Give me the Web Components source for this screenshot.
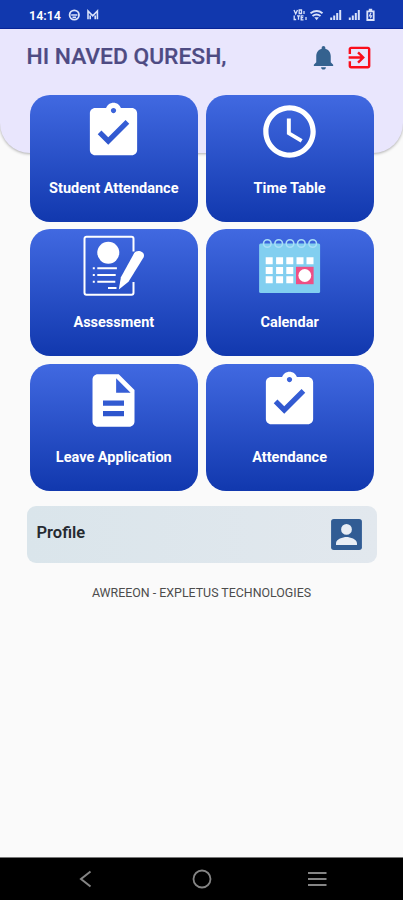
<!DOCTYPE html>
<html lang="en">
<head>
<meta charset="UTF-8">
<meta name="viewport" content="width=device-width, initial-scale=1.0">
<title>School Dashboard</title>
<style>
    html, body { height: 100%; }
    body {
        margin: 0;
        background: #fafafa;
        font-family: Roboto, "Liberation Sans", sans-serif;
        overflow: hidden;
    }
</style>
</head>
<body>
<school-app>
    <status-bar slot="top" time="14:14"></status-bar>
    <app-header>HI NAVED QURESH,</app-header>
    <menu-grid>
        <menu-card icon="task">Student Attendance</menu-card>
        <menu-card icon="clock">Time Table</menu-card>
        <menu-card icon="assessment">Assessment</menu-card>
        <menu-card icon="calendar">Calendar</menu-card>
        <menu-card icon="document">Leave Application</menu-card>
        <menu-card icon="task">Attendance</menu-card>
    </menu-grid>
    <profile-row>Profile</profile-row>
    <app-credit>AWREEON - EXPLETUS TECHNOLOGIES</app-credit>
    <nav-bar slot="bottom"></nav-bar>
</school-app>

<script>
const ICONS = {
    task: `<svg viewBox="0 0 24 24" fill="#fff"><path d="M19 3h-4.18C14.4 1.84 13.3 1 12 1s-2.4.84-2.82 2H5c-1.1 0-2 .9-2 2v14c0 1.1.9 2 2 2h14c1.1 0 2-.9 2-2V5c0-1.1-.9-2-2-2zm-7 0c.55 0 1 .45 1 1s-.45 1-1 1-1-.45-1-1 .45-1 1-1zm-2 14l-4-4 1.41-1.41L10 14.17l6.59-6.59L18 9l-8 8z"/></svg>`,
    clock: `<svg viewBox="0 0 24 24" fill="#fff"><path d="M11.99 2C6.47 2 2 6.48 2 12s4.47 10 9.99 10C17.52 22 22 17.52 22 12S17.52 2 11.99 2zM12 20c-4.42 0-8-3.58-8-8s3.58-8 8-8 8 3.58 8 8-3.58 8-8 8zm.5-13H11v6l5.25 3.15.75-1.23-4.5-2.67z"/></svg>`,
    document: `<svg viewBox="0 0 24 24" fill="#fff"><path d="M14 2H6c-1.1 0-1.99.9-1.99 2L4 20c0 1.1.89 2 1.99 2H18c1.1 0 2-.9 2-2V8l-6-6zm2 16H8v-2h8v2zm0-4H8v-2h8v2zm-3-5V3.5L18.5 9H13z"/></svg>`,
    assessment: `<svg viewBox="-.5 -.5 63 63" fill="none" stroke="#fff" stroke-width="2">
        <path d="M51 17V4.2a2 2 0 0 0-2-2H4a2 2 0 0 0-2 2v54a2 2 0 0 0 2 2h45a2 2 0 0 0 2-2V47.5"/>
        <circle cx="25.8" cy="18.2" r="11" fill="#fff" stroke="none"/>
        <path d="M14.8 33.8h19.6M14.8 40.5h18.4M14.8 47.2h18M25.5 53.5h8.5M10.3 33.8h2M10.3 40.5h2M10.3 47.2h2"/>
        <path d="M36.3 55l2.1-12.3L51.7 18.6c2.5-4.5 12-1.6 9.3 4.3L46 47.3z" fill="#fff" stroke="none"/>
    </svg>`,
    calendar: `<svg viewBox="-.5 -.5 63 63">
        <rect x=".6" y="9" width="61" height="49.4" rx="1.5" fill="#82cff0"/>
        <g fill="none" stroke="#a9def7" stroke-width="1.6">
            <circle cx="8.8" cy="9" r="3.8"/><circle cx="20.2" cy="9" r="3.8"/><circle cx="31.5" cy="9" r="3.8"/><circle cx="42.8" cy="9" r="3.8"/><circle cx="54.2" cy="9" r="3.8"/>
        </g>
        <path fill="#fff" d="M7.2 22.8h7v7h-7zM17.6 22.8h7v7h-7zM27.8 22.8h7v7h-7zM38 22.8h7v7h-7zM48 22.8h7v7h-7zM7.2 32.6h7v7h-7zM17.6 32.6h7v7h-7zM27.8 32.6h7v7h-7zM7.2 41.8h7v7h-7zM17.6 41.8h7v7h-7zM27.8 41.8h7v7h-7z"/>
        <rect x="37.5" y="32.3" width="17.6" height="17.4" fill="#ef4f85"/>
        <circle cx="46.3" cy="41" r="6.4" fill="#fff"/>
    </svg>`
};

class SchoolApp extends HTMLElement {
    constructor() {
        super();
        this.attachShadow({ mode: 'open' }).innerHTML = `
            <style>
                :host { display: flex; flex-direction: column; height: 100vh; }
                main { flex: 1; min-height: 0; }
            </style>
            <slot name="top"></slot>
            <main><slot></slot></main>
            <slot name="bottom"></slot>
        `;
    }
}

class StatusBar extends HTMLElement {
    connectedCallback() {
        this.attachShadow({ mode: 'open' }).innerHTML = `
            <style>
                :host {
                    display: flex;
                    align-items: center;
                    box-sizing: border-box;
                    height: 28.5px;
                    padding: 3px 28px 0 29px;
                    background: #1138ae;
                    border-bottom: 1.5px solid #0826a0;
                    color: #fff;
                }
                time { font-size: 12.5px; font-weight: 600; width: 39px; }
                svg { display: block; }
                .right { margin-left: auto; }
            </style>
            <time>${this.getAttribute('time')}</time>
            <svg width="32" height="14" viewBox="0 0 32 14" fill="none" stroke="#d9e2fa">
                <circle cx="6.3" cy="7" r="4.7" stroke-width="1.8"/>
                <path d="M3.2 7h6.2M4.5 9.2h3.6" stroke-width="1.4"/>
                <path d="M20 11.2V3l4.7 4.8L29.4 3v8.2M22.2 11.2V7.5M27.2 11.2V7.5" stroke-width="1.6"/>
            </svg>
            <svg class="right" width="82" height="14" viewBox="0 0 82 14" fill="none" stroke="#d9e2fa">
                <path d="M1 2l1.7 4L4.5 2M6.2 2h2.3v3.5H6.2zM1.2 7.5v4h2M4 7.8h3M5.5 7.8v4M10.5 7.8H8.2v4h2.3M8.2 9.7h2M11 3v3M13 9v3" stroke-width="1.3"/>
                <path d="M17.5 5.2q6.5-4.5 12 0M19.5 8q4-3 8 0" stroke-width="1.9"/>
                <path d="M21.3 9.2h4.6l-2.3 3z" fill="#d9e2fa" stroke="none"/>
                <path d="M38.2 12V9.5M41.2 12V7.5M44.2 12V5M47.2 12V2" stroke-width="2"/>
                <path d="M56.8 12V9.5M59.8 12V7.5M62.8 12V5M65.8 12V2" stroke-width="2"/>
                <path d="M74.3 3.3h6.4v8.7h-6.4zM75.8 1.7h3.4" stroke-width="1.8"/>
                <path d="M78 4.8l-1.5 3h2l-1.1 2.5" stroke-width="1.2"/>
            </svg>
        `;
    }
}

class AppHeader extends HTMLElement {
    constructor() {
        super();
        this.attachShadow({ mode: 'open' }).innerHTML = `
            <style>
                :host {
                    display: flex;
                    align-items: flex-start;
                    box-sizing: border-box;
                    height: 124.5px;
                    padding: 14px 29.5px 0 26.5px;
                    background: #e9e6fd;
                    border-radius: 0 0 30px 30px;
                    box-shadow: 0 1px 3px rgba(0, 0, 0, .3);
                }
                h1 { margin: 0; font-size: 22.8px; line-height: 27px; font-weight: 500; color: #4e4b83; -webkit-text-stroke: .2px #4e4b83; white-space: nowrap; }
                .actions { display: flex; gap: 6.5px; margin-left: auto; }
                svg { display: block; width: 29px; height: 29px; }
            </style>
            <h1><slot></slot></h1>
            <div class="actions">
                <svg viewBox="0 0 24 24" fill="#35628f"><path d="M12 22c1.1 0 2-.9 2-2h-4c0 1.1.89 2 2 2zm6-6v-5c0-3.07-1.64-5.64-4.5-6.32V4c0-.83-.67-1.5-1.5-1.5s-1.5.67-1.5 1.5v.68C7.63 5.36 6 7.92 6 11v5l-2 2v1h16v-1l-2-2z"/></svg>
                <svg viewBox="0 0 24 24" fill="#fb0d1b"><path d="M10.09 15.59L11.5 17l5-5-5-5-1.41 1.41L12.67 11H3v2h9.67l-2.58 2.59zM19 3H5c-1.11 0-2 .9-2 2v4h2V5h14v14H5v-4H3v4c0 1.1.89 2 2 2h14c1.1 0 2-.9 2-2V5c0-1.1-.9-2-2-2z"/></svg>
            </div>
        `;
    }
}

class MenuGrid extends HTMLElement {
    constructor() {
        super();
        // the negative margin pulls the first row up over the header
        this.attachShadow({ mode: 'open' }).innerHTML = `
            <style>
                :host {
                    display: grid;
                    grid-template-columns: 168px 168px;
                    grid-auto-rows: 127px;
                    gap: 7.6px 7.8px;
                    margin: -58.3px 0 0 29.8px;
                }
            </style>
            <slot></slot>
        `;
    }
}

class MenuCard extends HTMLElement {
    connectedCallback() {
        this.attachShadow({ mode: 'open' }).innerHTML = `
            <style>
                :host {
                    display: flex;
                    flex-direction: column;
                    align-items: center;
                    box-sizing: border-box;
                    padding-top: 5px;
                    border-radius: 20px;
                    background: linear-gradient(#4169e1, #1138ae);
                    color: #fff;
                }
                svg { display: block; width: 63px; height: 63px; }
                span { margin-top: 17px; font-size: 14.5px; line-height: 18px; font-weight: 700; white-space: nowrap; }
            </style>
            ${ICONS[this.getAttribute('icon')]}
            <span><slot></slot></span>
        `;
    }
}

class ProfileRow extends HTMLElement {
    constructor() {
        super();
        this.attachShadow({ mode: 'open' }).innerHTML = `
            <style>
                :host {
                    display: flex;
                    align-items: center;
                    justify-content: space-between;
                    box-sizing: border-box;
                    height: 57px;
                    margin: 15.2px 26px 0 27px;
                    padding: 0 12px 0 9.5px;
                    border-radius: 9px;
                    background: linear-gradient(90deg, #dae5eb, #e2e8ee);
                }
                span { font-size: 16.5px; font-weight: 600; color: #252a30; margin-top: -4px; }
                svg { display: block; width: 37px; height: 37px; }
            </style>
            <span><slot></slot></span>
            <svg viewBox="0 0 24 24">
                <rect x="2" y="2" width="20" height="20" rx="1.8" fill="#315c94"/>
                <path fill="#e8edf5" d="M12 5.2a3.5 3.5 0 1 1 0 7 3.5 3.5 0 0 1 0-7zM5.2 18.8v-1.2c0-2.6 4.5-4 6.8-4s6.8 1.4 6.8 4v1.2z"/>
            </svg>
        `;
    }
}

class AppCredit extends HTMLElement {
    constructor() {
        super();
        this.attachShadow({ mode: 'open' }).innerHTML = `
            <style>
                :host { display: block; margin-top: 22px; text-align: center; font-size: 12.4px; line-height: 16px; color: #4c4c4c; }
            </style>
            <slot></slot>
        `;
    }
}

class NavBar extends HTMLElement {
    constructor() {
        super();
        this.attachShadow({ mode: 'open' }).innerHTML = `
            <style>
                :host {
                    display: flex;
                    align-items: center;
                    justify-content: space-between;
                    box-sizing: border-box;
                    height: 43px;
                    padding: 0 73px;
                    background: #000;
                    border-top: 1.5px solid #777;
                }
                svg { display: block; width: 24px; height: 24px; }
            </style>
            <svg viewBox="0 0 24 24" fill="none" stroke="#858585" stroke-width="2"><path d="M17.5 4.5L8 12l9.5 7.5"/></svg>
            <svg viewBox="0 0 24 24" fill="none" stroke="#858585" stroke-width="1.8"><circle cx="12" cy="12" r="8.5"/></svg>
            <svg viewBox="0 0 24 24" fill="none" stroke="#858585" stroke-width="2"><path d="M2 6H20.5M2 12H20.5M2 18H20.5"/></svg>
        `;
    }
}

customElements.define('school-app', SchoolApp);
customElements.define('status-bar', StatusBar);
customElements.define('app-header', AppHeader);
customElements.define('menu-grid', MenuGrid);
customElements.define('menu-card', MenuCard);
customElements.define('profile-row', ProfileRow);
customElements.define('app-credit', AppCredit);
customElements.define('nav-bar', NavBar);
</script>
</body>
</html>
